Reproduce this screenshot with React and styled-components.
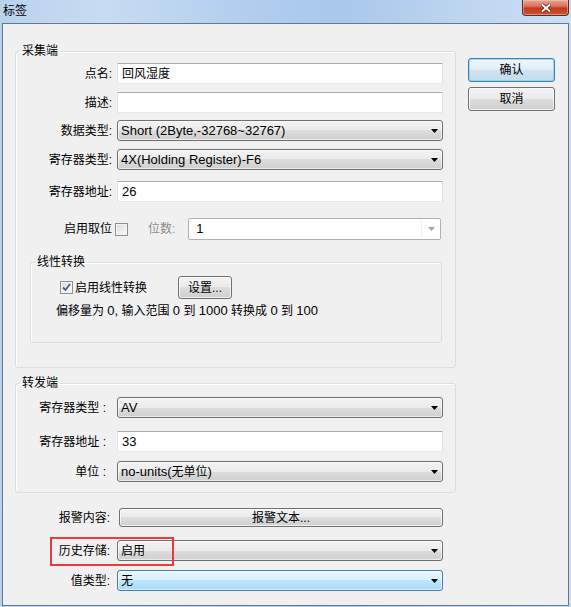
import styled, { createGlobalStyle } from "styled-components";

const GlobalStyle = createGlobalStyle`
  html, body {
    margin: 0;
    padding: 0;
  }
  body {
    color: #000;
    font-family: "Liberation Sans", "Noto Sans CJK SC", sans-serif;
    font-size: 12px;
    line-height: 14px;
  }
`;

const Window = styled.div`
  background: linear-gradient(
    to right,
    #b9d2ec 0%,
    #c7dcf2 18%,
    #b0cdee 45%,
    #a9c8ec 60%,
    #bcd5f0 80%,
    #cbdff4 100%
  );
  box-sizing: border-box;
  display: flex;
  flex-direction: column;
  height: 607px;
  padding: 0 2px 1px 2px;
  width: 571px;
`;

const TitleBar = styled.div`
  display: flex;
  flex-shrink: 0;
  height: 23px;
  justify-content: space-between;
`;

const Title = styled.div`
  padding: 4px 0 0 1px;
`;

const CloseButton = styled.div`
  align-items: center;
  background: linear-gradient(#e9a898 0%, #d8745f 40%, #c23a1d 55%, #cc5631 100%);
  border: 1px solid #5b2a22;
  border-radius: 0 0 4px 4px;
  border-top: none;
  box-shadow: inset 0 0 0 1px rgba(255, 200, 180, 0.5);
  box-sizing: border-box;
  display: flex;
  height: 16px;
  justify-content: center;
  width: 47px;
`;

const Client = styled.div`
  background: #f0f0f0;
  border: 1px solid #667790;
  display: flex;
  flex: 1;
`;

const LeftCol = styled.div`
  display: flex;
  flex-direction: column;
  padding: 20px 0 0 12px;
  width: 441px;
`;

const RightCol = styled.div`
  display: flex;
  flex-direction: column;
  gap: 5px;
  margin-left: 12px;
  padding-top: 34px;
`;

const Group = styled.fieldset`
  border: 1px solid #d5dfe5;
  border-radius: 3px;
  box-shadow: inset 1px 1px 0 #fff;
  box-sizing: border-box;
  margin: ${(p) => p.$margin || "0"};
  min-width: 0;
  padding: ${(p) => p.$padding};
  width: ${(p) => p.$width}px;
`;

const Legend = styled.legend`
  line-height: 14px;
  margin-left: 4px;
  padding: 0 2px;
`;

const GroupBody = styled.div`
  padding-left: ${(p) => p.$indent}px;
`;

const Row = styled.div`
  align-items: center;
  display: flex;
  height: ${(p) => p.$h || 21}px;
  margin-top: ${(p) => p.$mt || 0}px;
  position: relative;
`;

const Label = styled.div`
  color: ${(p) => (p.$disabled ? "#8d8d8d" : "#000")};
  flex-shrink: 0;
  margin-left: ${(p) => p.$ml || 0}px;
  margin-right: ${(p) => p.$gap}px;
  text-align: right;
  white-space: nowrap;
  width: ${(p) => (p.$w ? `${p.$w}px` : "auto")};
`;

const Latin = styled.span`
  font-size: 13px;
`;

const TextBox = styled.div`
  align-items: center;
  background: #fff;
  border: 1px solid;
  border-color: #abadb3 #dbdfe6 #e3e9ef #e2e3ea;
  box-sizing: border-box;
  display: flex;
  height: 21px;
  padding: 0 4px;
  width: 326px;
`;

const Combo = styled.div`
  align-items: center;
  background: ${(p) =>
    p.$focus
      ? "linear-gradient(#eaf6fd 0%, #d9f0fc 50%, #bee6fd 50%, #a7d9f5 100%)"
      : "linear-gradient(#f2f2f2 0%, #ebebeb 50%, #dddddd 50%, #cfcfcf 100%)"};
  border: 1px solid ${(p) => (p.$focus ? "#3c7fb1" : "#707070")};
  border-radius: 3px;
  box-shadow: inset 0 0 0 1px rgba(255, 255, 255, 0.6);
  box-sizing: border-box;
  display: flex;
  height: 21px;
  justify-content: space-between;
  padding: 0 4px 0 3px;
  width: 326px;
`;

const DisabledCombo = styled.div`
  background: #fff;
  border: 1px solid #adb2b5;
  border-radius: 2px;
  box-sizing: border-box;
  display: flex;
  height: 22px;
  margin-left: 13px;
  width: 253px;
`;

const DisabledField = styled.div`
  align-items: center;
  border-right: 1px solid #eeeeee;
  display: flex;
  flex: 1;
  margin: 2px 0 2px 2px;
  padding-left: 5px;
`;

const DisabledArrow = styled.div`
  align-items: center;
  display: flex;
  justify-content: center;
  width: 18px;
`;

const Button = styled.div`
  align-items: center;
  background: ${(p) =>
    p.$default
      ? "linear-gradient(#edf6fb 0%, #e1eef7 50%, #cfe3f0 50%, #c3dcec 100%)"
      : "linear-gradient(#f2f2f2 0%, #ebebeb 50%, #dddddd 50%, #cfcfcf 100%)"};
  border: 1px solid ${(p) => (p.$default ? "#3c7fb1" : "#707070")};
  border-radius: 3px;
  box-shadow: inset 0 0 0 1px
    ${(p) => (p.$default ? "rgba(120, 200, 240, 0.6)" : "rgba(255, 255, 255, 0.7)")};
  box-sizing: border-box;
  display: flex;
  flex-shrink: 0;
  height: ${(p) => p.$h}px;
  justify-content: center;
  margin-left: ${(p) => p.$ml || 0}px;
  width: ${(p) => p.$w}px;
`;

const Box = styled.div`
  align-items: center;
  background: linear-gradient(135deg, #dcdcdc, #fbfbfb);
  border: 1px solid #8f8f8f;
  box-shadow: inset 0 0 0 1px #f4f4f4;
  box-sizing: border-box;
  display: flex;
  flex-shrink: 0;
  height: 13px;
  justify-content: center;
  width: 13px;
`;

const CheckRow = styled.div`
  align-items: center;
  display: flex;
  height: 23px;
  margin-left: 4px;
`;

const CheckText = styled.span`
  margin-left: 2px;
`;

const InfoLine = styled.div`
  margin-top: 5px;
  white-space: pre;
`;

const Highlight = styled.div`
  border: 2px solid #ee3a3e;
  box-sizing: border-box;
  height: 29px;
  left: 35px;
  pointer-events: none;
  position: absolute;
  top: -3px;
  width: 124px;
`;

function Arrow({ color = "#000" }) {
  return (
    <svg width="7" height="4" viewBox="0 0 7 4">
      <path d="M0 0H7L3.5 4Z" fill={color} />
    </svg>
  );
}

function Check({ checked }) {
  return (
    <Box>
      {checked && (
        <svg width="9" height="9" viewBox="0 0 9 9">
          <path
            d="M1 4.5L3.5 7L8 1"
            fill="none"
            stroke="#4a5d92"
            strokeWidth="1.8"
          />
        </svg>
      )}
    </Box>
  );
}

function Select({ children, focus }) {
  return (
    <Combo $focus={focus}>
      <span>{children}</span>
      <Arrow />
    </Combo>
  );
}

function App() {
  return (
    <>
      <GlobalStyle />
      <Window>
        <TitleBar>
          <Title>标签</Title>
          <CloseButton>
            <svg width="12" height="10" viewBox="0 0 12 10">
              <path d="M2 1.5L10 8.5M10 1.5L2 8.5" stroke="#4a2a24" strokeWidth="3.4" />
              <path d="M2 1.5L10 8.5M10 1.5L2 8.5" stroke="#fff" strokeWidth="1.8" />
            </svg>
          </CloseButton>
        </TitleBar>
        <Client>
          <LeftCol>
            <Group $width={441} $padding="5px 12px 24px 0">
              <Legend>采集端</Legend>
              <Row>
                <Label $w={96} $gap={5}>点名:</Label>
                <TextBox>回风湿度</TextBox>
              </Row>
              <Row $mt={8}>
                <Label $w={96} $gap={5}>描述:</Label>
                <TextBox />
              </Row>
              <Row $mt={7}>
                <Label $w={96} $gap={5}>数据类型:</Label>
                <Select>
                  <Latin>Short (2Byte,-32768~32767)</Latin>
                </Select>
              </Row>
              <Row $mt={8}>
                <Label $w={96} $gap={5}>寄存器类型:</Label>
                <Select>
                  <Latin>4X(Holding Register)-F6</Latin>
                </Select>
              </Row>
              <Row $mt={11}>
                <Label $w={96} $gap={5}>寄存器地址:</Label>
                <TextBox>
                  <Latin>26</Latin>
                </TextBox>
              </Row>
              <Row $mt={16} $h={22}>
                <Label $w={96} $gap={3}>启用取位</Label>
                <Check />
                <Label $gap={0} $ml={20} $disabled>位数:</Label>
                <DisabledCombo>
                  <DisabledField>
                    <Latin>1</Latin>
                  </DisabledField>
                  <DisabledArrow>
                    <Arrow color="#a6a6a6" />
                  </DisabledArrow>
                </DisabledCombo>
              </Row>
              <Group $width={412} $margin="15px 0 0 14px" $padding="7px 0 24px 0">
                <Legend>线性转换</Legend>
                <GroupBody $indent={25}>
                  <CheckRow>
                    <Check checked />
                    <CheckText>启用线性转换</CheckText>
                    <Button $w={54} $h={23} $ml={31}>设置...</Button>
                  </CheckRow>
                  <InfoLine>
                    偏移量为 <Latin>0,</Latin> 输入范围 <Latin>0</Latin> 到{" "}
                    <Latin>1000</Latin> 转换成 <Latin>0</Latin> 到 <Latin>100</Latin>
                  </InfoLine>
                </GroupBody>
              </Group>
            </Group>

            <Group $width={441} $margin="8px 0 0 0" $padding="7px 12px 10px 0">
              <Legend>转发端</Legend>
              <Row>
                <Label $w={90} $gap={11}>寄存器类型 :</Label>
                <Select>
                  <Latin>AV</Latin>
                </Select>
              </Row>
              <Row $mt={13}>
                <Label $w={90} $gap={11}>寄存器地址 :</Label>
                <TextBox>
                  <Latin>33</Latin>
                </TextBox>
              </Row>
              <Row $mt={9}>
                <Label $w={90} $gap={11}>单位 :</Label>
                <Select>
                  <Latin>no-units(</Latin>无单位<Latin>)</Latin>
                </Select>
              </Row>
            </Group>

            <Row $mt={15} $h={19}>
              <Label $w={95} $gap={7}>报警内容:</Label>
              <Button $w={324} $h={19} $ml={2}>报警文本...</Button>
            </Row>
            <Row $mt={13}>
              <Label $w={95} $gap={7}>历史存储:</Label>
              <Select>启用</Select>
              <Highlight />
            </Row>
            <Row $mt={9}>
              <Label $w={95} $gap={7}>值类型:</Label>
              <Select focus>无</Select>
            </Row>
          </LeftCol>
          <RightCol>
            <Button $w={87} $h={24} $default>确认</Button>
            <Button $w={87} $h={24}>取消</Button>
          </RightCol>
        </Client>
      </Window>
    </>
  );
}

export default App;
